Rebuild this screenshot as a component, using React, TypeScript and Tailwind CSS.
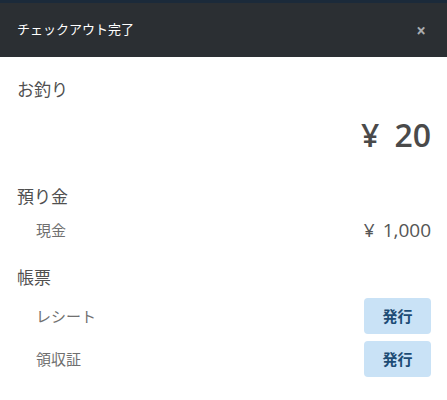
const Section = ({ title, children }: { title: string; children: React.ReactNode }) => (
  <div>
    <h3 className="text-[17px] leading-6 text-[#505050]">{title}</h3>
    {children}
  </div>
)

const IssueRow = ({ label }: { label: string }) => (
  <div className="flex items-center justify-between pl-[19px]">
    <span className="text-[15px] text-[#707070]">{label}</span>
    <button className="h-9 w-[67px] rounded-[4px] bg-[#c9e2f6] text-[15px] font-bold text-[#1d4c75]">
      発行
    </button>
  </div>
)

export default function App() {
  return (
    <div className="w-[447px] h-[400px] bg-white font-['Open_Sans','Noto_Sans_CJK_JP',sans-serif]">
      <div className="h-[3px] bg-[#1b2a3a]" />
      <div className="flex h-[54px] items-center justify-between bg-[#2b2f33] pl-[17px] pr-[21px]">
        <h2 className="text-[13px] text-white">チェックアウト完了</h2>
        <button className="text-[17px] font-bold leading-none text-[#a9acaf]">×</button>
      </div>

      <div className="pl-[17px] pr-4 pt-[21px]">
        <Section title="お釣り">
          <div className="mt-[13px] flex justify-end gap-[15px] text-[32px] font-semibold leading-10 text-[#4a4a4a]">
            <span>¥</span>
            <span>20</span>
          </div>
        </Section>

        <div className="mt-[30px]">
          <Section title="預り金">
            <div className="mt-[9px] flex items-center justify-between pl-[19px] leading-6">
              <span className="text-[15px] text-[#707070]">現金</span>
              <span className="flex gap-[8px] text-[19px] text-[#555]">
                <span>¥</span>
                <span>1,000</span>
              </span>
            </div>
          </Section>
        </div>

        <div className="mt-[24px]">
          <Section title="帳票">
            <div className="mt-2 flex flex-col gap-[7px]">
              <IssueRow label="レシート" />
              <IssueRow label="領収証" />
            </div>
          </Section>
        </div>
      </div>
    </div>
  )
}
